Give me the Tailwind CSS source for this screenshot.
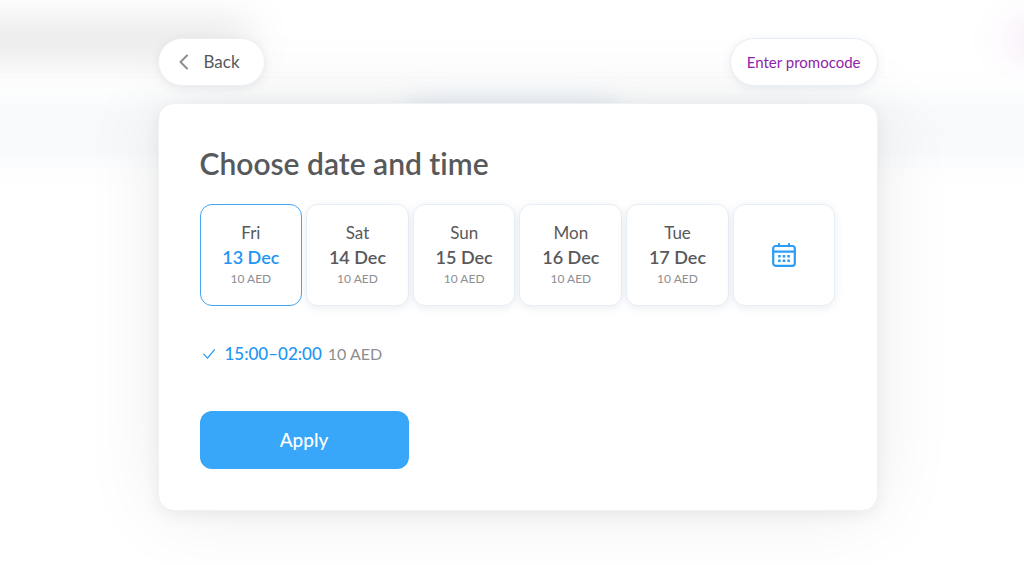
<!DOCTYPE html>
<html lang="en">
<head>
    <meta charset="UTF-8">
    <meta name="viewport" content="width=device-width, initial-scale=1.0">
    <script src="https://cdn.jsdelivr.net/npm/@tailwindcss/browser@4"></script>
    <title>Choose date and time</title>
</head>
<body class="relative min-h-screen overflow-hidden bg-white font-['Lato','Open_Sans',sans-serif] text-[#58595b] [font-variant-ligatures:none]">

    <!-- Blurred page behind the dialog -->
    <div class="absolute inset-0 -z-10 overflow-hidden" aria-hidden="true">
        <div class="absolute -left-20 top-[26px] h-7 w-[330px] bg-black/13 blur-[20px]"></div>
        <div class="absolute -inset-x-20 top-[98px] h-[64px] bg-[#f7f9fb] blur-[12px]"></div>
        <div class="absolute -right-8 top-[24px] h-8 w-12 bg-[#9c27b0]/10 blur-[18px]"></div>
        <div class="absolute inset-x-[40%] top-[108px] h-6 bg-[#b8d0e4]/60 blur-[16px]"></div>
    </div>

    <div class="pl-[11px]">
        <main class="relative mx-auto max-w-[720px] pt-[38px] pb-10">

            <div class="relative z-10 mb-[17px] flex items-center justify-between">
                <button type="button" class="flex h-12 items-center gap-4 rounded-full border border-[#edf1f6] bg-white pl-5 pr-6 text-[17px] shadow-[0_2px_8px_rgba(80,90,110,0.10)]">
                    <svg class="h-4 w-[9px]" viewBox="0 0 9 16" fill="none" stroke="#8e8e90" stroke-width="2" stroke-linecap="round" stroke-linejoin="round" aria-hidden="true"><path d="M8 1.5 1.5 8 8 14.5"/></svg>
                    Back
                </button>
                <button type="button" class="h-12 rounded-full border border-[#e8eef6] bg-white px-4 text-[15px] text-[#8e24aa] shadow-[0_2px_8px_rgba(80,100,140,0.10)]">Enter promocode</button>
            </div>

            <form class="rounded-2xl border border-[#eff2f4] bg-white p-[41px] shadow-[0_4px_16px_rgba(0,0,0,0.06),0_0_80px_rgba(0,0,0,0.08)]">
                <h1 class="mb-[23px] text-[30px] leading-9 font-semibold">Choose date and time</h1>

                <div class="grid grid-cols-6 gap-1">
                    <label class="flex h-[102px] flex-col items-center justify-center rounded-xl border border-[#42a5f5] bg-white">
                        <input type="radio" name="date" class="sr-only" checked>
                        <span class="text-[17px] leading-6">Fri</span>
                        <span class="text-[18px] leading-6 font-semibold text-[#2196f3]">13 Dec</span>
                        <span class="text-[12px] leading-5 text-[#8e8e90]">10 AED</span>
                    </label>
                    <label class="flex h-[102px] flex-col items-center justify-center rounded-xl border border-[#e8eef5] bg-white shadow-[0_2px_8px_rgba(80,110,150,0.12)]">
                        <input type="radio" name="date" class="sr-only">
                        <span class="text-[17px] leading-6">Sat</span>
                        <span class="text-[18px] leading-6 font-semibold">14 Dec</span>
                        <span class="text-[12px] leading-5 text-[#8e8e90]">10 AED</span>
                    </label>
                    <label class="flex h-[102px] flex-col items-center justify-center rounded-xl border border-[#e8eef5] bg-white shadow-[0_2px_8px_rgba(80,110,150,0.12)]">
                        <input type="radio" name="date" class="sr-only">
                        <span class="text-[17px] leading-6">Sun</span>
                        <span class="text-[18px] leading-6 font-semibold">15 Dec</span>
                        <span class="text-[12px] leading-5 text-[#8e8e90]">10 AED</span>
                    </label>
                    <label class="flex h-[102px] flex-col items-center justify-center rounded-xl border border-[#e8eef5] bg-white shadow-[0_2px_8px_rgba(80,110,150,0.12)]">
                        <input type="radio" name="date" class="sr-only">
                        <span class="text-[17px] leading-6">Mon</span>
                        <span class="text-[18px] leading-6 font-semibold">16 Dec</span>
                        <span class="text-[12px] leading-5 text-[#8e8e90]">10 AED</span>
                    </label>
                    <label class="flex h-[102px] flex-col items-center justify-center rounded-xl border border-[#e8eef5] bg-white shadow-[0_2px_8px_rgba(80,110,150,0.12)]">
                        <input type="radio" name="date" class="sr-only">
                        <span class="text-[17px] leading-6">Tue</span>
                        <span class="text-[18px] leading-6 font-semibold">17 Dec</span>
                        <span class="text-[12px] leading-5 text-[#8e8e90]">10 AED</span>
                    </label>
                    <button type="button" aria-label="Pick another date" class="flex h-[102px] items-center justify-center rounded-xl border border-[#e8eef5] bg-white shadow-[0_2px_8px_rgba(80,110,150,0.12)]">
                        <svg class="h-6 w-6" viewBox="0 0 24 24" fill="none" stroke="#2b9df6" stroke-width="2.2" stroke-linecap="round" aria-hidden="true">
                            <rect x="1.2" y="3" width="21.6" height="19.8" rx="2.5"/>
                            <path d="M1.2 8.6h21.6M7 1.2v2M17 1.2v2"/>
                            <path stroke-width="2.6" stroke-linecap="butt" d="M6.1 13.2h2.6M10.7 13.2h2.6M15.3 13.2h2.6M6.1 17.8h2.6M10.7 17.8h2.6M15.3 17.8h2.6"/>
                        </svg>
                    </button>
                </div>

                <label class="mt-9 flex h-6 items-center text-[17px]">
                    <input type="radio" name="time" class="sr-only" checked>
                    <svg class="ml-[3px] mr-[10px] h-[10px] w-3" viewBox="0 0 12 10" fill="none" stroke="#2196f3" stroke-width="1.2" stroke-linecap="round" stroke-linejoin="round" aria-hidden="true"><path d="M.7 5.2 4.5 9.2 11.4.8"/></svg>
                    <span class="mr-1.5 font-medium text-[#2196f3]">15:00–02:00</span>
                    <span class="text-[16px] text-[#8e8e90]">10 AED</span>
                </label>

                <button type="submit" class="mt-[45px] h-[58px] w-full max-w-[209px] rounded-xl bg-[#38a6f9] text-[19px] font-medium text-white">Apply</button>
            </form>
        </main>
    </div>

</body>
</html>
